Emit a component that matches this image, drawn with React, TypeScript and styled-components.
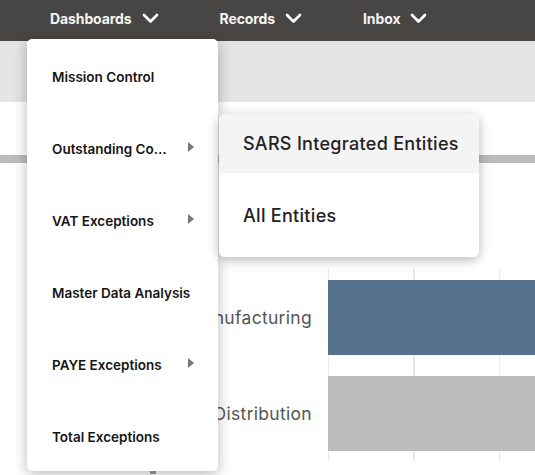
import styled, { createGlobalStyle } from "styled-components";

const GlobalStyle = createGlobalStyle`
    html, body {
        margin: 0;
        padding: 0;
        background: #ffffff;
    }

    body {
        font-family: Inter, "Noto Sans", "Liberation Sans", sans-serif;
    }
`;

const navItems = ["Dashboards", "Records", "Inbox"];

const dashboardItems = [
    { label: "Mission Control", sub: false },
    { label: "Outstanding Compliance", sub: true },
    { label: "VAT Exceptions", sub: true },
    { label: "Master Data Analysis", sub: false },
    { label: "PAYE Exceptions", sub: true },
    { label: "Total Exceptions", sub: false },
];

const bars = [
    { label: "Manufacturing", color: "#56728f" },
    { label: "Distribution", color: "#bdbdbd" },
];

export default function App(): JSX.Element {
    return (
        <>
            <GlobalStyle />
            <Page>
                <NavBar>
                    {navItems.map((item, i) => (
                        <NavItem key={item}>
                            <span>{item}</span>
                            <Chevron />
                            {i === 0 && <DashboardsMenu />}
                        </NavItem>
                    ))}
                </NavBar>
                <Band />
                <Card />
                <ChartSection>
                    {bars.map((bar) => (
                        <ChartRow key={bar.label}>
                            <BarLabel>{bar.label}</BarLabel>
                            <Plot>
                                <Bar $color={bar.color} />
                            </Plot>
                        </ChartRow>
                    ))}
                </ChartSection>
                <AxisStub />
            </Page>
        </>
    );
}

const Chevron = (): JSX.Element => (
    <svg width="17" height="11" viewBox="0 0 17 11">
        <polyline
            points="2,2 8.5,8.5 15,2"
            fill="none"
            stroke="#ffffff"
            strokeWidth="2.7"
            strokeLinecap="round"
            strokeLinejoin="round"
        />
    </svg>
);

const DashboardsMenu = (): JSX.Element => {
    return (
        <Menu>
            {dashboardItems.map((item) => (
                <MenuItem key={item.label}>
                    <MenuText>{item.label}</MenuText>
                    {item.sub && <Arrow />}
                    {item.label === "Outstanding Compliance" && (
                        <SubMenu>
                            <SubItem $active $height={59}>SARS Integrated Entities</SubItem>
                            <SubItem $height={84}>All Entities</SubItem>
                        </SubMenu>
                    )}
                </MenuItem>
            ))}
        </Menu>
    );
};

const Page = styled.div`
    position: relative;
    width: 535px;
    height: 475px;
    overflow: hidden;
    background: #ffffff;
`;

const NavBar = styled.nav`
    height: 41px;
    background: #474644;
    display: flex;
    align-items: stretch;
    gap: 61px;
    padding-left: 50px;
    position: relative;
    z-index: 5;
`;

const NavItem = styled.div`
    position: relative;
    display: flex;
    align-items: center;
    gap: 10px;
    color: #f4f4f4;
    font-size: 14px;
    font-weight: 700;
    letter-spacing: -0.1px;
    padding-bottom: 5px;
    box-sizing: border-box;

    svg {
        margin-top: 1px;
    }
`;

const Band = styled.div`
    height: 61px;
    background: #e4e4e4;
`;

const Card = styled.div`
    height: 53px;
    background: #ffffff;
    border-bottom: 8px solid #bcbcbc;
`;

const ChartSection = styled.section`
    padding-top: 106px;
`;

const ChartRow = styled.div`
    display: grid;
    grid-template-columns: 312px 1fr;
    column-gap: 16px;
    align-items: center;
`;

const BarLabel = styled.div`
    text-align: right;
    font-size: 17.5px;
    font-weight: 400;
    letter-spacing: 0.3px;
    color: #555555;
    white-space: nowrap;
`;

const Plot = styled.div`
    height: 96px;
    display: flex;
    align-items: center;
    background-image: repeating-linear-gradient(
        to right,
        #e8e8e8 0px,
        #e8e8e8 1px,
        transparent 1px,
        transparent 85.5px
    );
`;

const Bar = styled.div<{ $color: string }>`
    width: 100%;
    height: 75px;
    background: ${(p) => p.$color};
`;

const AxisStub = styled.div`
    width: 6px;
    height: 10px;
    margin: 3px 0 0 150px;
    background: #9a9a9a;
`;

const Menu = styled.div`
    position: absolute;
    top: calc(100% - 2px);
    left: -23px;
    width: 191px;
    background: #ffffff;
    border-radius: 5px;
    box-shadow: 0 3px 14px rgba(0, 0, 0, 0.28);
    color: #151515;
`;

const MenuItem = styled.div`
    position: relative;
    height: 72px;
    display: flex;
    align-items: center;
    padding: 0 24px 0 25px;
    font-size: 13.5px;
    font-weight: 600;
    letter-spacing: 0;
`;

const MenuText = styled.span`
    flex: 1;
    min-width: 0;
    overflow: hidden;
    white-space: nowrap;
    text-overflow: ellipsis;
    padding-top: 3px;
`;

const Arrow = styled.span`
    flex: none;
    margin-left: 16px;
    width: 0;
    height: 0;
    border-top: 5.5px solid transparent;
    border-bottom: 5.5px solid transparent;
    border-left: 6px solid #777777;
`;

const SubMenu = styled.div`
    position: absolute;
    top: 3px;
    left: calc(100% + 1px);
    width: 260px;
    background: #ffffff;
    border-radius: 6px;
    overflow: hidden;
    box-shadow: 0 3px 12px rgba(0, 0, 0, 0.28);
`;

const SubItem = styled.div<{ $active?: boolean; $height: number }>`
    height: ${(p) => p.$height}px;
    display: flex;
    align-items: center;
    padding-left: 24px;
    font-size: 18px;
    font-weight: 500;
    letter-spacing: 0.3px;
    color: #222222;
    background: ${(p) => (p.$active ? "#f4f4f4" : "#ffffff")};
`;
